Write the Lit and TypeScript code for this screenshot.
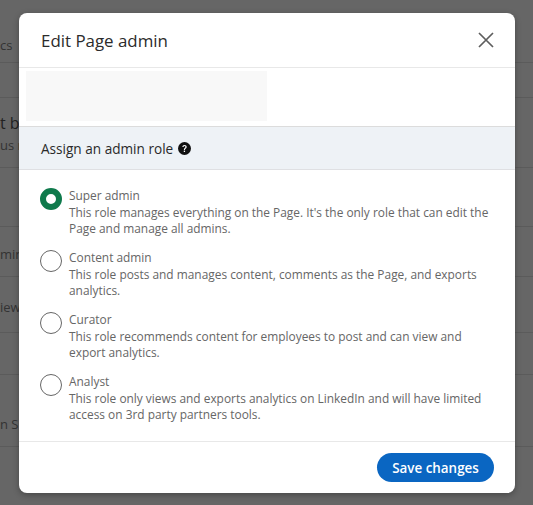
import { LitElement, html, css, svg } from "lit";
import { customElement } from "lit/decorators.js";

const roles = [
  { name: "Super admin", lines: ["This role manages everything on the Page. It's the only role that can edit the", "Page and manage all admins."], on: true },
  { name: "Content admin", lines: ["This role posts and manages content, comments as the Page, and exports", "analytics."], on: false },
  { name: "Curator", lines: ["This role recommends content for employees to post and can view and", "export analytics."], on: false },
  { name: "Analyst", lines: ["This role only views and exports analytics on LinkedIn and will have limited", "access on 3rd party partners tools."], on: false },
];

const bgRows = [
  { h: 63, cls: "end", lines: [{ t: "cs", c: "small" }] },
  { h: 35, cls: "", lines: [] },
  { h: 70, cls: "", lines: [{ t: "t b", c: "big" }, { t: "us n", c: "small" }] },
  { h: 59, cls: "", lines: [] },
  { h: 50, cls: "low", lines: [{ t: "min", c: "small" }] },
  { h: 56, cls: "low", lines: [{ t: "iew", c: "small" }] },
  { h: 42, cls: "", lines: [] },
  { h: 72, cls: "end2", lines: [{ t: "n S", c: "small" }] },
  { h: 58, cls: "last", lines: [] },
];

@customElement("app-root")
export class AppRoot extends LitElement {
  static styles = css`
    :host { display: block; position: relative; width: 533px; height: 505px; overflow: hidden; background: #666; font-family: "Open Sans", "Noto Sans", sans-serif; }
    .page { display: flex; flex-direction: column; height: 505px; }
    .bgrow { border-bottom: 1px solid #5b5b5b; box-sizing: border-box; color: #2f2f2f; display: flex; flex-direction: column; justify-content: center; white-space: nowrap; }
    .bgrow.end { justify-content: flex-end; padding-bottom: 7px; }
    .bgrow.end2 { justify-content: flex-end; padding-bottom: 12px; }
    .bgrow.low { padding-top: 4px; }
    .bgrow.last { border-bottom: none; }
    .small { font-size: 13px; line-height: 20px; color: #333; }
    .big { font-size: 16px; line-height: 24px; color: #222; }
    .modal { position: absolute; left: 19px; top: 13px; width: 496px; height: 480px; box-sizing: border-box; background: #fff; border-radius: 8px; display: flex; flex-direction: column; box-shadow: 0 2px 6px rgba(0,0,0,.3); overflow: hidden; }
    .head { height: 55px; flex: none; display: flex; align-items: center; justify-content: space-between; padding: 0 21px 0 22px; border-bottom: 1px solid #e8e8e8; box-sizing: border-box; }
    .title { font-size: 16.9px; color: #2b2b2b; }
    .close { display: block; width: 16px; height: 16px; }
    .blank { height: 58px; flex: none; padding: 3px 0 5px 7px; box-sizing: border-box; }
    .blank div { width: 241px; height: 50px; background: #f8f8f8; }
    .assign { height: 44px; flex: none; box-sizing: border-box; background: #eef2f6; border-top: 1px solid #dcdcdc; border-bottom: 1px solid #dfe0e3; display: flex; align-items: center; gap: 5px; padding-left: 22px; font-size: 13.6px; color: #2a2a2a; }
    .list { flex: 1; display: flex; flex-direction: column; gap: 12.3px; padding-top: 17px; padding-left: 21px; }
    .role { display: flex; gap: 7px; font-size: 11.9px; line-height: 16.6px; color: #666; white-space: nowrap; }
    .role .radio { flex: none; width: 22px; height: 22px; box-sizing: border-box; border-radius: 50%; border: 1px solid #666; margin-top: 1px; }
    .role .radio.on { border: 6px solid #0f7a4c; }
    .foot { height: 52px; flex: none; border-top: 1px solid #e8e8e8; box-sizing: border-box; display: flex; justify-content: flex-end; align-items: center; padding-right: 21px; }
    .save { height: 29px; width: 117px; border-radius: 15px; background: #0a66c2; color: #fff; font-size: 13.4px; font-weight: 600; display: flex; align-items: center; justify-content: center; }
  `;
  render() {
    return html`
      <div class="page">
        ${bgRows.map((r) => html`<div class="bgrow ${r.cls}" style="height:${r.h}px">${r.lines.map((x) => html`<span class=${x.c}>${x.t}</span>`)}</div>`)}
      </div>
      <div class="modal">
        <div class="head">
          <span class="title">Edit Page admin</span>
          <svg class="close" viewBox="0 0 16 16">${svg`<path d="M1 1L15 15M15 1L1 15" stroke="#5e5e5e" stroke-width="1.7" fill="none"/>`}</svg>
        </div>
        <div class="blank"><div></div></div>
        <div class="assign">
          <span>Assign an admin role</span>
          <svg width="13" height="13" viewBox="0 0 16 16">${svg`<circle cx="8" cy="8" r="8" fill="#111"/><path d="M5.4 6.2C5.4 4.7 6.5 3.8 8 3.8s2.7.9 2.7 2.2c0 1.9-2.2 1.9-2.2 3.7H7.2c0-2.5 2-2.6 2-3.7 0-.6-.5-1-1.2-1s-1.2.4-1.2 1.2z" fill="#fff"/><rect x="7.1" y="10.6" width="1.6" height="1.7" fill="#fff"/>`}</svg>
        </div>
        <div class="list">
          ${roles.map((r) => html`<div class="role"><div class="radio ${r.on ? "on" : ""}"></div><div><div>${r.name}</div>${r.lines.map((l) => html`<div>${l}</div>`)}</div></div>`)}
        </div>
        <div class="foot"><div class="save">Save changes</div></div>
      </div>
    `;
  }
}
